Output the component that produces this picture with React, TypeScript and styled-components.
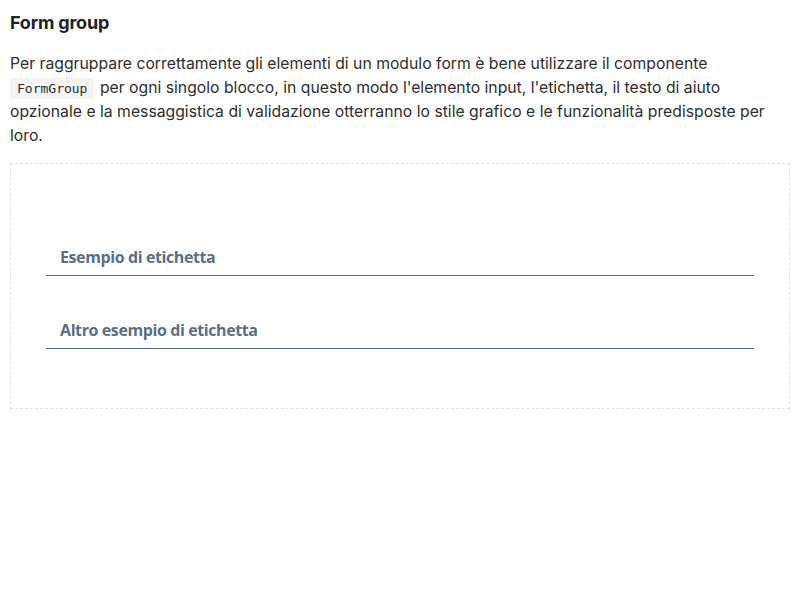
import React from 'react';
import styled, { createGlobalStyle } from 'styled-components';

const GlobalStyle = createGlobalStyle`
    html, body {
        margin: 0;
        padding: 0;
        background: #ffffff;
    }
    body {
        font-family: Inter, "Liberation Sans", sans-serif;
        color: #2e2e2e;
    }
`;

export default function App() {
    return (
        <>
            <GlobalStyle />
            <PageWrapper>
                <Title>Form group</Title>
                <Description>
                    Per raggruppare correttamente gli elementi di un modulo form
                    è bene utilizzare il componente <Code>FormGroup</Code> per
                    ogni singolo blocco, in questo modo l'elemento input,
                    l'etichetta, il testo di aiuto opzionale e la messaggistica
                    di validazione otterranno lo stile grafico e le
                    funzionalità predisposte per loro.
                </Description>

                <Preview>
                    <FormGroup>
                        <Field>
                            <Label>Esempio di etichetta</Label>
                        </Field>
                    </FormGroup>
                    <FormGroup>
                        <Field>
                            <Label>Altro esempio di etichetta</Label>
                        </Field>
                    </FormGroup>
                </Preview>
            </PageWrapper>
        </>
    );
}

const PageWrapper = styled.div`
    padding: 12px 10px;
`;

const Title = styled.h2`
    margin: 0 0 18px;
    font-size: 18px;
    line-height: 22px;
    font-weight: 700;
    letter-spacing: -0.2px;
    color: #222222;
`;

const Description = styled.p`
    margin: 0 0 15px;
    font-size: 15.75px;
    line-height: 24px;
    color: #2e2e2e;
`;

const Code = styled.code`
    font-family: "DejaVu Sans Mono", "Liberation Mono", monospace;
    font-size: 13px;
    line-height: 1;
    padding: 3px 7px;
    margin-right: 1px;
    border-radius: 3px;
    background: #f4f4f4;
    color: #2a2a2a;
`;

const Preview = styled.div`
    display: flex;
    flex-direction: column;
    gap: 33px;
    padding: 72px 35px 59px;
    border: 1px dashed #e3e3e3;
`;

const FormGroup = styled.div`
    display: flex;
    flex-direction: column;
`;

const Field = styled.div`
    display: flex;
    align-items: flex-end;
    height: 40px;
    box-sizing: border-box;
    padding: 0 14px 6px;
    border-bottom: 1px solid #5c6f82;
`;

const Label = styled.label`
    font-family: "Open Sans", "Liberation Sans", sans-serif;
    font-size: 16px;
    line-height: 24px;
    font-weight: 700;
    letter-spacing: -0.4px;
    color: #5c6f82;
`;
